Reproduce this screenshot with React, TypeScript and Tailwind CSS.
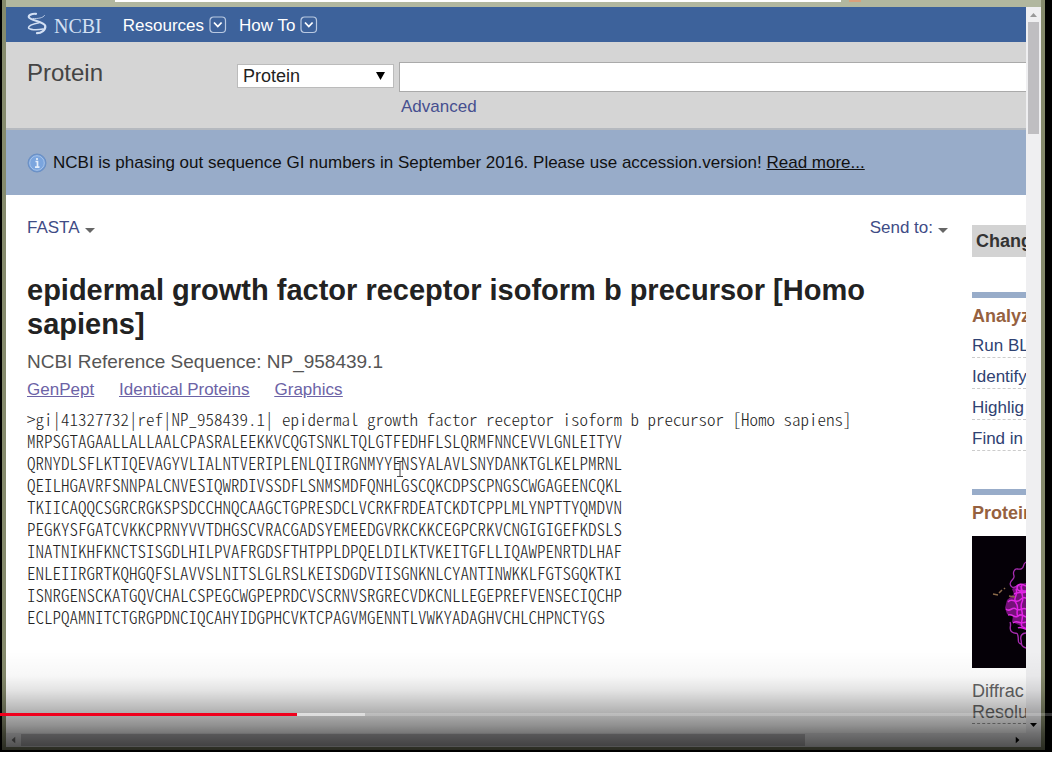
import React from "react";

const sequence = [
  ">gi|41327732|ref|NP_958439.1| epidermal growth factor receptor isoform b precursor [Homo sapiens]",
  "MRPSGTAGAALLALLAALCPASRALEEKKVCQGTSNKLTQLGTFEDHFLSLQRMFNNCEVVLGNLEITYV",
  "QRNYDLSFLKTIQEVAGYVLIALNTVERIPLENLQIIRGNMYYENSYALAVLSNYDANKTGLKELPMRNL",
  "QEILHGAVRFSNNPALCNVESIQWRDIVSSDFLSNMSMDFQNHLGSCQKCDPSCPNGSCWGAGEENCQKL",
  "TKIICAQQCSGRCRGKSPSDCCHNQCAAGCTGPRESDCLVCRKFRDEATCKDTCPPLMLYNPTTYQMDVN",
  "PEGKYSFGATCVKKCPRNYVVTDHGSCVRACGADSYEMEEDGVRKCKKCEGPCRKVCNGIGIGEFKDSLS",
  "INATNIKHFKNCTSISGDLHILPVAFRGDSFTHTPPLDPQELDILKTVKEITGFLLIQAWPENRTDLHAF",
  "ENLEIIRGRTKQHGQFSLAVVSLNITSLGLRSLKEISDGDVIISGNKNLCYANTINWKKLFGTSGQKTKI",
  "ISNRGENSCKATGQVCHALCSPEGCWGPEPRDCVSCRNVSRGRECVDKCNLLEGEPREFVENSECIQCHP",
  "ECLPQAMNITCTGRGPDNCIQCAHYIDGPHCVKTCPAGVMGENNTLVWKYADAGHVCHLCHPNCTYGS",
];

const tools = ["Run BL", "Identify", "Highlig", "Find in"];

function Caret({ className }: { className: string }) {
  return (
    <svg viewBox="0 0 10 5" preserveAspectRatio="none" className={className} fill="currentColor" aria-hidden="true">
      <path d="M0 0h10L5 5z" />
    </svg>
  );
}

function MenuButton({ label }: { label: string }) {
  return (
    <button className="flex items-center gap-[5px] text-[17px] leading-6 text-white">
      {label}
      <svg viewBox="0 0 18 18" className="mb-[2px] size-[18px] text-[#b9c9e2]" fill="none" stroke="currentColor" aria-hidden="true">
        <rect x="1" y="1" width="15.5" height="15.5" rx="3.5" strokeWidth="1.2" />
        <path d="M5 6.500l3.800 4 3.800-4" strokeWidth="1.800" stroke="#ffffff" />
      </svg>
    </button>
  );
}

function NcbiLogo() {
  return (
    <a href="#ncbi" className="flex items-center gap-[7px] text-[#d3e0f4]">
      <svg viewBox="0 0 20 24" className="mb-1 h-6 w-5" fill="none" stroke="currentColor" strokeLinecap="round" aria-hidden="true">
        <path d="M9 1.800C4.500 1.500 .8 3.200 2 5.500 4 8.500 17.500 9.500 18.300 14c.4 4-4 7-8.300 7.200" strokeWidth="2.200" />
        <path d="M6 6.500c5 .3 10-.5 11.500-3" strokeWidth="1" opacity="0.8" />
        <path d="M12 10.800C6 12 1.500 13.500 1.500 15.800c.5 2 8 2.600 14.500 1.200" strokeWidth="1.500" />
      </svg>
      <span className="font-['Liberation_Serif',serif] text-[20px] leading-6">NCBI</span>
    </a>
  );
}

function ProteinStructure() {
  return (
    <svg viewBox="0 0 54 132" className="block h-[132px] w-full bg-[#050007]" fill="none" stroke="#a62bb0" role="img" aria-label="Protein structure">
      <path d="M54 26c-4 2-1 6-5 7s-5-2-7 2 2 5-1 8-4 6-1 8 5-3 8-1 1 7 6 6" strokeWidth="1.300" />
      <path d="M38 86c2 4-2 7 2 10s5-1 6 4-1 7 3 8M54 97c-4 0-6 3-5 7s-1 6 5 8" strokeWidth="1.400" />
      <path d="M54 47l-8 1-6 5 2 5-7 6-2 8 2 6 6 2-1 6 7 3 7 5z" fill="#c01cc6" fillOpacity="0.6" stroke="none" />
      <path d="M54 50c-5-3-9-2-9 2s5 3 9 3M42 58c5-3 9 0 12-2M36 66c4-5 8 2 12-2s4-2 6-2M34 73c4 4 6-3 10 0s6-2 10 0M36 79c5-2 6 4 10 1s5 0 8 1M41 87c4-4 7 2 13-1M46 92c3-2 5 1 8 1" stroke="#e02be4" strokeWidth="1.500" />
      <path d="M44 53c3 6-4 9 0 14s-1 9 2 14M50 49c-3 7 3 11 0 17s2 9 0 18 2 6 4 9" stroke="#e31ee8" strokeWidth="1.500" />
      <path d="M21 58l5 1M27 57l3-3M32 53l1-1M37 60l6 1" stroke="#8b6a4a" strokeWidth="1.500" />
    </svg>
  );
}

export default function App() {
  return (
    <div className="relative w-full overflow-hidden bg-black pr-[7px] pb-[2px] pl-[2px] font-['Liberation_Sans',Arial,sans-serif]">
      <div className="border-x-4 border-b-[3px] border-[#858a6c] bg-white">
        <div className="flex h-[7px] items-start bg-[#b1b79f] pl-[109px]">
          <div className="h-[2px] flex-1 bg-white" />
          <div className="mr-[180px] ml-2 h-[2px] w-3 bg-[#d9a07c]" />
        </div>
        <div className="flex">
          <div className="min-w-0 flex-1 overflow-hidden">
            <nav className="flex h-[35px] items-center bg-[#3d629b] pt-[2px] pl-[21px]">
              <NcbiLogo />
              <div className="ml-[21px] flex gap-3">
                <MenuButton label="Resources" />
                <MenuButton label="How To" />
              </div>
            </nav>

            <header className="flex h-[88px] border-b-2 border-[#b5b9bf] bg-[#d5d5d5] pt-5 pl-[21px]">
              <h2 className="w-[210px] shrink-0 text-[24px] leading-[22px] text-[#444]">Protein</h2>
              <form className="flex min-w-0 flex-1 items-start gap-[5px]">
                <div className="relative mt-[2px] w-[157px] shrink-0">
                  <select aria-label="Database" className="block h-6 w-full appearance-none border border-[#bbb] bg-white pl-[5px] text-[18px] leading-5 text-[#222]">
                    <option>Protein</option>
                  </select>
                  <Caret className="pointer-events-none absolute top-[8px] right-[9px] h-[8px] w-[9px] text-black" />
                </div>
                <div className="min-w-0 flex-1">
                  <input type="text" aria-label="Search term" className="block h-[30px] w-full border border-r-0 border-[#aaa] bg-white px-2 text-[18px]" />
                  <a href="#advanced" className="mt-[5px] block pl-[2px] text-[17px] leading-5 text-[#464f8f]">Advanced</a>
                </div>
              </form>
            </header>

            <div className="flex h-[65px] items-center gap-[6px] bg-[#98acc9] pl-[21px] text-[17px] whitespace-nowrap text-[#111]">
              <svg viewBox="0 0 20 20" className="size-5 shrink-0" aria-hidden="true">
                <circle cx="10" cy="10" r="9" fill="#6c97d3" stroke="#6a8fc4" />
                <circle cx="10" cy="10" r="7.300" fill="#7ba5de" stroke="#a9c5ea" />
                <path d="M8.500 8.500h2v5.500M8 14.200h4.500M10 5v2" stroke="#e4eefb" strokeWidth="1.700" fill="none" />
              </svg>
              <p>
                NCBI is phasing out sequence GI numbers in September 2016. Please use accession.version!{" "}
                <a href="#more" className="underline">Read more...</a>
              </p>
            </div>

            <div className="flex gap-6 pl-[21px]">
              <main className="min-w-0 flex-1">
                <div className="flex justify-between pt-[22px] text-[17px] leading-[22px] text-[#3f4c86]">
                  <button className="flex items-center gap-[5px]">
                    FASTA
                    <Caret className="mt-1 h-[5px] w-[10px] text-[#666]" />
                  </button>
                  <button className="flex items-center gap-[5px]">
                    Send to:
                    <Caret className="mt-1 h-[5px] w-[10px] text-[#666]" />
                  </button>
                </div>
                <h1 className="mt-[34px] text-[29px] leading-[34px] font-bold text-[#222]">
                  epidermal growth factor receptor isoform b precursor [Homo sapiens]
                </h1>
                <p className="mt-[10px] text-[19px] leading-[22px] text-[#555]">NCBI Reference Sequence: NP_958439.1</p>
                <div className="mt-[6px] flex gap-[25px] text-[17px] leading-[22px] text-[#6c63a6] underline">
                  <a href="#genpept">GenPept</a>
                  <a href="#identical">Identical Proteins</a>
                  <a href="#graphics">Graphics</a>
                </div>
                <pre className="relative mt-[7px] font-['Noto_Sans_CJK_KR',monospace] text-[17px] leading-[22px] font-light text-[#222] [font-feature-settings:'hwid']">
                  {sequence.join("\n")}
                  <svg viewBox="0 0 8 18" className="absolute top-[52px] left-[369px] h-[18px] w-2" fill="none" stroke="#444" aria-hidden="true">
                    <path d="M1 1.500h6M4 1.500v15M1 16.500h6" />
                  </svg>
                </pre>
              </main>

              <aside className="w-[54px] shrink-0 overflow-hidden pt-[30px] pb-[9px] text-[18px] whitespace-nowrap">
                <button className="block h-8 w-full overflow-hidden bg-[#d3d3d3] pt-px pl-1 text-left font-bold text-[#333]">Chang</button>
                <section className="mt-[35px] border-t-[6px] border-[#98acc9] pt-2">
                  <h3 className="leading-5 font-bold text-[#96613f]">Analyz</h3>
                  <ul className="mt-px text-[17px] text-[#2f4272]">
                    {tools.map((item) => (
                      <li key={item} className="h-[31px] border-b border-dashed border-[#ccc] pt-[8px] leading-[22px]">
                        <a href="#tool">{item}</a>
                      </li>
                    ))}
                  </ul>
                </section>
                <section className="mt-[38px] border-t-[6px] border-[#98acc9] pt-2">
                  <h3 className="mb-[13px] leading-5 font-bold text-[#96613f]">Protein</h3>
                  <ProteinStructure />
                  <p className="mt-[13px] border-b border-dashed border-[#999] leading-[21px] text-[#666]">
                    Diffrac
                    <br />
                    Resolu
                  </p>
                </section>
              </aside>
            </div>
          </div>

          <div className="flex w-[15px] shrink-0 flex-col items-center justify-between bg-[#efeff1] pt-[6px] pb-[6px]">
            <div className="flex w-full flex-col items-center gap-[5px]">
              <Caret className="h-[4px] w-[7px] rotate-180 text-[#999]" />
              <div className="h-[112px] w-[11px] bg-[#bfbec1]" />
            </div>
            <Caret className="h-[4px] w-[7px] text-black" />
          </div>
        </div>

        <div className="flex h-[14px] items-center bg-[#efeff1] pr-[20px] pl-1">
          <Caret className="h-[4px] w-[7px] rotate-90 text-[#777]" />
          <div className="ml-1 h-3 w-[784px] bg-[#bfbec1]" />
          <Caret className="ml-auto h-[4px] w-[7px] -rotate-90 text-black" />
        </div>
      </div>

      <div className="pointer-events-none absolute inset-x-0 bottom-0 h-[112px] bg-[linear-gradient(to_bottom,rgb(0_0_0/0)_10%,rgb(0_0_0/0.03)_32%,rgb(0_0_0/0.11)_45%,rgb(0_0_0/0.2)_54%,rgb(0_0_0/0.29)_63%,rgb(0_0_0/0.43)_76%,rgb(0_0_0/0.53)_83%,rgb(0_0_0/0.61)_91%,rgb(0_0_0/0.7)_100%)]" />
      <div role="progressbar" aria-label="Playback" aria-valuenow={28} className="absolute inset-x-0 bottom-[36px] flex h-[3px] bg-white/20">
        <div className="w-[297px] bg-[#f0001d]" />
        <div className="w-[68px] bg-white/50" />
      </div>
    </div>
  );
}
